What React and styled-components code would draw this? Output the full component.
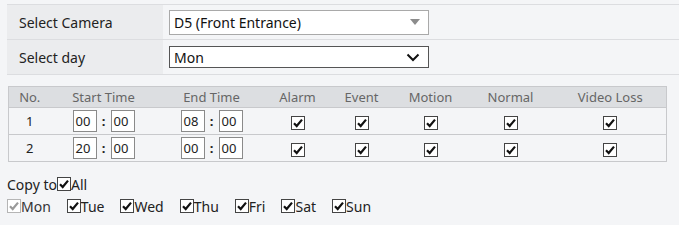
import React from 'react';
import styled, { createGlobalStyle } from 'styled-components';

const GlobalStyle = createGlobalStyle`
  body {
    margin: 0;
    background: #f4f5f7;
    font-family: "Noto Sans", "Open Sans", sans-serif;
    font-size: 13px;
    color: #333;
  }
`;

const Page = styled.div`
  width: 679px;
  height: 225px;
  overflow: hidden;
`;

const Form = styled.div`
  margin-left: 7px;
  padding-top: 4px;
`;

const FormRow = styled.div`
  display: flex;
  height: 34px;
  border-bottom: 1px solid #dcdde0;
  border-top: ${({ first }) => (first ? '1px solid #dcdde0' : 'none')};
`;

const Label = styled.div`
  width: 144px;
  padding-left: 12px;
  background: #ebecee;
  display: flex;
  align-items: center;
  font-size: 14px;
  color: #222;
`;

const Field = styled.div`
  padding-left: 6px;
  display: flex;
  align-items: center;
`;

const Select = styled.div`
  box-sizing: border-box;
  width: 260px;
  height: ${({ h }) => h}px;
  background: #fff;
  border: 1px solid ${({ dark }) => (dark ? '#555' : '#a9a9a9')};
  display: flex;
  align-items: center;
  justify-content: space-between;
  padding: 0 8px 0 4px;
  font-size: 14px;
  color: #111;
`;

const Table = styled.table`
  margin: 11px 0 0 8px;
  border-collapse: collapse;
  border: 1px solid #c8c9cc;
  table-layout: fixed;
  width: 658px;
`;

const Th = styled.th`
  background: #dcdee1;
  height: 20px;
  padding: 0;
  font-weight: normal;
  color: #666;
  font-size: 13px;
  text-align: center;
`;

const Td = styled.td`
  height: 26px;
  padding: 0;
  text-align: center;
  border-top: 1px solid #c8c9cc;
  color: #222;
`;

const TimeWrap = styled.div`
  display: inline-flex;
  align-items: center;
  vertical-align: middle;
`;

const TimeBox = styled.div`
  box-sizing: border-box;
  width: 24px;
  height: 22px;
  background: #fff;
  border: 1px solid #8a8a8a;
  display: flex;
  align-items: center;
  padding-left: 2px;
  font-size: 13px;
  color: #222;
`;

const Colon = styled.span`
  width: 14px;
  text-align: center;
  font-weight: bold;
`;

const CopyArea = styled.div`
  margin: 12px 0 0 7px;
  font-size: 14px;
  color: #222;
`;

const Line = styled.div`
  display: flex;
  align-items: center;
  gap: ${({ gap }) => gap || 0}px;
  height: 20px;
  margin-bottom: ${({ mb }) => mb || 0}px;
`;

const Opt = styled.label`
  display: inline-flex;
  align-items: center;
  color: ${({ disabled }) => (disabled ? '#333' : '#222')};
`;

const Box = styled.span`
  display: inline-flex;
  vertical-align: middle;
`;

const Check = ({ disabled }) => (
  <Box>
    <svg width="14" height="14" viewBox="0 0 14 14">
      <rect x="0.5" y="0.5" width="13" height="13" fill="#fff" stroke={disabled ? '#b5b5b5' : '#444'} />
      <path d="M3 7.2 L5.7 10 L11 3.6" fill="none" stroke={disabled ? '#9a9a9a' : '#111'} strokeWidth="2.2" />
    </svg>
  </Box>
);

const Time = ({ a, b }) => (
  <TimeWrap>
    <TimeBox>{a}</TimeBox>
    <Colon>:</Colon>
    <TimeBox>{b}</TimeBox>
  </TimeWrap>
);

const Caret = () => (
  <svg width="10" height="6" viewBox="0 0 10 6">
    <path d="M0 0 H10 L5 6 Z" fill="#8c8c8c" />
  </svg>
);

const Chevron = () => (
  <svg width="14" height="9" viewBox="0 0 14 9">
    <path d="M1.5 1.5 L7 7 L12.5 1.5" fill="none" stroke="#111" strokeWidth="2" />
  </svg>
);

const cols = [42, 106, 110, 62, 66, 72, 88, 112];
const heads = ['No.', 'Start Time', 'End Time', 'Alarm', 'Event', 'Motion', 'Normal', 'Video Loss'];
const rows = [
  { no: 1, s: ['00', '00'], e: ['08', '00'] },
  { no: 2, s: ['20', '00'], e: ['00', '00'] },
];
const days = ['Mon', 'Tue', 'Wed', 'Thu', 'Fri', 'Sat', 'Sun'];

export default function App() {
  return (
    <Page>
      <GlobalStyle />
      <Form>
        <FormRow first>
          <Label>Select Camera</Label>
          <Field>
            <Select h={25}>
              D5 (Front Entrance)
              <Caret />
            </Select>
          </Field>
        </FormRow>
        <FormRow>
          <Label>Select day</Label>
          <Field>
            <Select h={22} dark>
              Mon
              <Chevron />
            </Select>
          </Field>
        </FormRow>
      </Form>

      <Table>
        <colgroup>
          {cols.map((w, i) => (
            <col key={i} style={{ width: w }} />
          ))}
        </colgroup>
        <thead>
          <tr>
            {heads.map((h) => (
              <Th key={h}>{h}</Th>
            ))}
          </tr>
        </thead>
        <tbody>
          {rows.map((r) => (
            <tr key={r.no}>
              <Td>{r.no}</Td>
              <Td><Time a={r.s[0]} b={r.s[1]} /></Td>
              <Td><Time a={r.e[0]} b={r.e[1]} /></Td>
              {[0, 1, 2, 3, 4].map((k) => (
                <Td key={k}><Check /></Td>
              ))}
            </tr>
          ))}
        </tbody>
      </Table>

      <CopyArea>
        <Line mb={2}>
          Copy to
          <Opt><Check />All</Opt>
        </Line>
        <Line gap={16}>
          {days.map((d, i) => (
            <Opt key={d} disabled={i === 0}>
              <Check disabled={i === 0} />
              {d}
            </Opt>
          ))}
        </Line>
      </CopyArea>
    </Page>
  );
}
